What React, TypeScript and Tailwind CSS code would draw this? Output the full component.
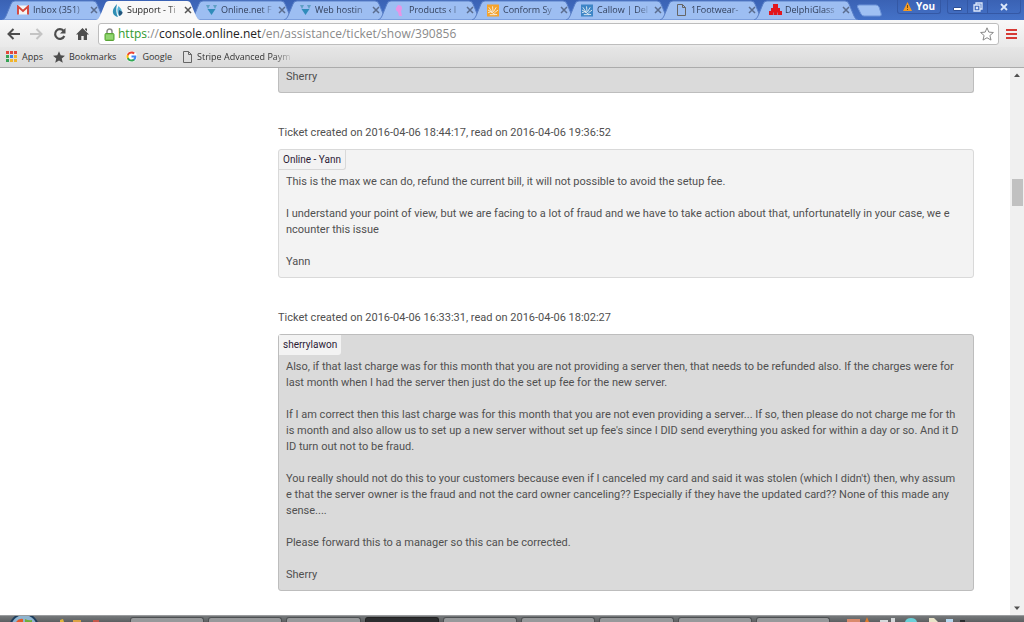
import { ReactNode } from "react";

interface TabRow {
  title: string;
  icon: ReactNode;
  active?: boolean;
}

const TABS: TabRow[] = [
  { title: "Inbox (351)", icon: <GmailIcon /> },
  { title: "Support - Ti", icon: <DropIcon />, active: true },
  { title: "Online.net F", icon: <PinsIcon /> },
  { title: "Web hostin", icon: <PinsIcon /> },
  { title: "Products ‹ I", icon: <PinkIcon /> },
  { title: "Conform Sy", icon: <BurstIcon className="text-[#f5a32c]" /> },
  { title: "Callow | Del", icon: <BurstIcon className="text-[#3d85c6]" /> },
  { title: "1Footwear-", icon: <PageIcon /> },
  { title: "DelphiGlass", icon: <GlassIcon /> },
];

const YANN = [
  "This is the max we can do, refund the current bill, it will not possible to avoid the setup fee.",
  "",
  "I understand your point of view, but we are facing to a lot of fraud and we have to take action about that, unfortunatelly in your case, we e",
  "ncounter this issue",
  "",
  "Yann",
];

const SHERRY = [
  "Also, if that last charge was for this month that you are not providing a server then, that needs to be refunded also. If the charges were for",
  "last month when I had the server then just do the set up fee for the new server.",
  "",
  "If I am correct then this last charge was for this month that you are not even providing a server... If so, then please do not charge me for th",
  "is month and also allow us to set up a new server without set up fee's since I DID send everything you asked for within a day or so. And it D",
  "ID turn out not to be fraud.",
  "",
  "You really should not do this to your customers because even if I canceled my card and said it was stolen (which I didn't) then, why assum",
  "e that the server owner is the fraud and not the card owner canceling?? Especially if they have the updated card?? None of this made any",
  "sense....",
  "",
  "Please forward this to a manager so this can be corrected.",
  "",
  "Sherry",
];

export default function App() {
  return (
    <div className="flex h-screen flex-col overflow-hidden bg-white font-['Open_Sans','Noto_Sans',sans-serif]">
      <TabStrip />
      <Toolbar />
      <Bookmarks />
      <div className="flex min-h-0 flex-1">
        <main className="min-w-0 flex-1 overflow-hidden pr-9 pl-[278px] font-[Roboto,sans-serif] text-[11px] leading-4 text-[#505050]">
          <div className="rounded-b-[3px] border border-t-0 border-[#bdbdbd] bg-[#dadada] px-[7px] pt-px pb-[7px]">
            Sherry
          </div>
          <Message
            header="Ticket created on 2016-04-06 18:44:17, read on 2016-04-06 19:36:52"
            author="Online - Yann"
            lines={YANN}
          />
          <Message
            header="Ticket created on 2016-04-06 16:33:31, read on 2016-04-06 18:02:27"
            author="sherrylawon"
            lines={SHERRY}
            own
          />
        </main>
        <Scrollbar />
      </div>
      <Taskbar />
    </div>
  );
}

function Message({
  header,
  author,
  lines,
  own,
}: {
  header: string;
  author: string;
  lines: string[];
  own?: boolean;
}) {
  return (
    <article className="mt-8">
      <h2 className="mb-2">{header}</h2>
      <div
        className={
          own
            ? "rounded-[3px] border border-[#bdbdbd] bg-[#dadada] pb-[7px]"
            : "rounded-[3px] border border-[#d9d9d9] bg-[#f3f3f3] pb-[7px]"
        }
      >
        <div className="flex">
          <span
            className={
              own
                ? "h-5 rounded-br-[3px] bg-[#f3f3f3] px-1 text-[10px] leading-5 text-[#2b1b35]"
                : "h-5 rounded-br-[3px] border-r border-b border-[#d9d9d9] px-1 text-[10px] leading-5 text-[#2b1b35]"
            }
          >
            {author}
          </span>
        </div>
        <p className="mt-1 px-[7px] whitespace-pre">{lines.join("\n")}</p>
      </div>
    </article>
  );
}

function TabStrip() {
  return (
    <header className="flex h-5 shrink-0 bg-linear-to-b from-[#3a62b4] to-[#4472c8] pl-[6px]">
      {TABS.map((tab) => (
        <Tab key={tab.title} tab={tab} />
      ))}
      <button type="button" aria-label="New tab" className="ml-1 h-5 shrink-0">
        <svg width="26" height="20" viewBox="0 0 26 20">
          <path d="M3 5h17q2 0 3 2l2 6q1 3-1 3H8q-2 0-3-2L1.500 7Q1 5 3 5z" fill="#9fc0f3" stroke="#6c93d8" />
        </svg>
      </button>
      <div className="ml-auto flex pr-[3px]">
        <button
          type="button"
          className="mr-[6px] flex h-[14px] w-11 items-center justify-center gap-1 rounded-b-[3px] border border-t-0 border-[#3458a5] text-[10px] font-bold text-white"
        >
          <svg width="9" height="9" viewBox="0 0 9 9">
            <path d="M4.500 0L9 9H0z" fill="#f59b23" />
            <path d="M4.500 3v3M4.500 7v1" stroke="#7a4a08" />
          </svg>
          You
        </button>
        <div className="flex h-[14px] divide-x divide-[#3458a5] rounded-b-[3px] border border-t-0 border-[#3458a5]">
          <button type="button" aria-label="Minimize" className="flex w-5 items-center justify-center">
            <svg width="9" height="14" viewBox="0 0 9 14">
              <path d="M.5 7.500h8v3h-8z" fill="#fff" stroke="#2d4f96" />
            </svg>
          </button>
          <button type="button" aria-label="Restore" className="flex w-5 items-center justify-center">
            <svg width="10" height="14" viewBox="0 0 10 14" fill="none" stroke="#dce8fb" strokeWidth="1.300">
              <path d="M3 5V3h6v6H7M1 5h6v6H1zM3.500 7.500h1v1h-1z" />
            </svg>
          </button>
          <button type="button" aria-label="Close" className="flex w-8 items-center justify-center">
            <svg width="8" height="14" viewBox="0 0 8 14" stroke="#dce8fb" strokeWidth="1.800">
              <path d="M1 4l6 6M7 4l-6 6" />
            </svg>
          </button>
        </div>
      </div>
    </header>
  );
}

function Tab({ tab }: { tab: TabRow }) {
  return (
    <div className={tab.active ? "relative z-10 h-5 w-[94px] min-w-0" : "relative h-5 w-[94px] min-w-0"}>
      <svg
        className="absolute top-0 -left-1 h-5 w-[104px]"
        viewBox="0 0 104 20"
        preserveAspectRatio="none"
      >
        <path
          d="M0 20Q3 19 4 16L9 4Q10 1 13 1H91Q94 1 95 4L100 16Q101 19 104 20z"
          fill={tab.active ? "#f8f8f8" : "#9dbef2"}
          stroke={tab.active ? "#f8f8f8" : "#5a80c8"}
          strokeWidth={tab.active ? 0 : 1}
        />
      </svg>
      <div className="relative flex h-5 items-center pl-[11px]">
        <a
          href="#"
          className={
            tab.active
              ? "flex items-center gap-1 text-[9px] leading-5 text-[#222]"
              : "flex items-center gap-1 text-[9px] leading-5 text-[#33415c]"
          }
        >
          <span className="flex w-3 shrink-0 justify-center">{tab.icon}</span>
          <span className="w-[54px] mask-r-from-75% mask-r-to-100% whitespace-nowrap">
            {tab.title}
          </span>
        </a>
        <button type="button" aria-label="Close tab" className="ml-[3px]">
          <svg
            width="8"
            height="8"
            viewBox="0 0 8 8"
            stroke={tab.active ? "#555" : "#5b6d8e"}
            strokeWidth="1.500"
          >
            <path d="M1 1l6 6M7 1L1 7" />
          </svg>
        </button>
      </div>
    </div>
  );
}

function Toolbar() {
  return (
    <div className="flex h-[27px] shrink-0 items-center bg-linear-to-b from-[#f8f8f8] to-[#e9e9e9] pt-px pl-[7px]">
      <nav className="flex w-[91px] items-center gap-[10px]">
        <button type="button" aria-label="Back">
          <svg width="13" height="14" viewBox="0 0 13 14" fill="none" stroke="#4d4d4d" strokeWidth="2">
            <path d="M13 7H2M6.500 2L1.500 7l5 5" />
          </svg>
        </button>
        <button type="button" aria-label="Forward">
          <svg width="13" height="14" viewBox="0 0 13 14" fill="none" stroke="#c4c4c4" strokeWidth="2">
            <path d="M0 7h11M6.500 2l5 5-5 5" />
          </svg>
        </button>
        <button type="button" aria-label="Reload">
          <svg width="13" height="14" viewBox="0 0 13 14">
            <path d="M10.500 3.800A4.800 4.800 0 1 0 11.300 9" fill="none" stroke="#4d4d4d" strokeWidth="2.200" />
            <path d="M12.500 1v5.500H7z" fill="#4d4d4d" />
          </svg>
        </button>
        <button type="button" aria-label="Home">
          <svg width="13" height="14" viewBox="0 0 13 14" fill="#4d4d4d">
            <path d="M6.500 1L13 7.500h-2V13H7.700V9H5.300v4H2V7.500H0zM9 1.500h2v3L9 2.500z" />
          </svg>
        </button>
      </nav>
      <div className="flex h-[22px] min-w-0 flex-1 items-center rounded-[3px] border border-[#bdbdbd] bg-white px-1">
        <svg width="11" height="13" viewBox="0 0 11 13" className="mx-[1px] shrink-0">
          <path d="M3 6V3.500a2.500 2.500 0 0 1 5 0V6" fill="none" stroke="#8a8a8a" strokeWidth="1.500" />
          <rect x="1" y="5.500" width="9" height="7" rx="1" fill="#7fca5a" stroke="#58a336" />
          <path d="M2 8h7M2 10h7" stroke="#a5df88" />
        </svg>
        <div className="ml-[2px] grid min-w-0 flex-1 text-xs leading-5">
          <span aria-hidden="true" className="col-start-1 row-start-1 whitespace-pre text-[#8a8a8a]">
            <span className="text-[#2f9a2f]">https</span>://
            <span className="text-[#222]">console.online.net</span>
            /en/assistance/ticket/show/390856
          </span>
          <input
            type="text"
            aria-label="Address"
            defaultValue="https://console.online.net/en/assistance/ticket/show/390856"
            className="col-start-1 row-start-1 min-w-0 bg-transparent text-transparent caret-black outline-none"
          />
        </div>
        <button type="button" aria-label="Bookmark this page">
          <svg width="14" height="14" viewBox="0 0 14 14" fill="#fff" stroke="#888" strokeLinejoin="round">
            <path d="M7 .8l1.800 4.300 4.600.4-3.500 3 1.100 4.600L7 10.700l-4 2.400 1.100-4.600-3.500-3 4.600-.4z" />
          </svg>
        </button>
      </div>
      <button type="button" aria-label="Menu" className="mx-[7px]">
        <svg width="11" height="12" viewBox="0 0 11 12" fill="#d63a35">
          <path d="M0 1h11v2H0zM0 5h11v2H0zM0 9h11v2H0z" />
        </svg>
      </button>
    </div>
  );
}

function Bookmarks() {
  return (
    <nav className="flex h-[21px] shrink-0 items-center border-b border-[#ababab] bg-linear-to-b from-[#e6e6e6] to-[#dadada] pb-px pl-[6px] text-[9px] text-[#333]">
      <a href="#" className="mr-[10px] flex items-center gap-[5px]">
        <svg width="11" height="11" viewBox="0 0 11 11">
          <path d="M0 0h3v3H0zM4 0h3v3H4zM8 0h3v3H8z" fill="#e2483b" />
          <path d="M0 4h3v3H0z" fill="#37a354" />
          <path d="M4 4h3v3H4z" fill="#3f7ee8" />
          <path d="M8 4h3v3H8z" fill="#f2b52c" />
          <path d="M0 8h3v3H0z" fill="#37a354" />
          <path d="M4 8h7v3H8V8H7v3H4z" fill="#f2b52c" />
        </svg>
        Apps
      </a>
      <a href="#" className="mr-[10px] flex items-center gap-1">
        <svg width="12" height="12" viewBox="0 0 14 14" fill="#4d4d4d">
          <path d="M7 .3l2 4.600 5 .5-3.800 3.300 1.200 5L7 11l-4.400 2.700 1.200-5L0 5.400l5-.5z" />
        </svg>
        Bookmarks
      </a>
      <a href="#" className="mr-[11px] flex items-center gap-[5px]">
        <svg width="11" height="11" viewBox="0 0 24 24">
          <rect width="24" height="24" rx="12" fill="#fff" />
          <path
            fill="#4285f4"
            d="M22.560 12.250c0-.78-.07-1.530-.2-2.250H12v4.260h5.920c-.26 1.370-1.040 2.530-2.210 3.310v2.770h3.570c2.080-1.920 3.280-4.740 3.280-8.090z"
          />
          <path
            fill="#34a853"
            d="M12 23c2.970 0 5.460-.98 7.280-2.660l-3.570-2.770c-.98.660-2.230 1.060-3.710 1.060-2.860 0-5.290-1.930-6.160-4.530H2.180v2.840C3.990 20.530 7.700 23 12 23z"
          />
          <path
            fill="#fbbc05"
            d="M5.840 14.090c-.22-.66-.35-1.360-.35-2.090s.13-1.430.35-2.090V7.070H2.180C1.430 8.550 1 10.220 1 12s.43 3.450 1.180 4.930z"
          />
          <path
            fill="#ea4335"
            d="M12 5.380c1.620 0 3.060.56 4.210 1.640l3.150-3.150C17.450 2.090 14.970 1 12 1 7.700 1 3.990 3.470 2.180 7.070l3.660 2.840c.87-2.600 3.300-4.530 6.160-4.530z"
          />
        </svg>
        Google
      </a>
      <a href="#" className="flex items-center gap-[5px]">
        <PageIcon />
        <span className="w-24 mask-r-from-80% mask-r-to-100% whitespace-nowrap">
          Stripe Advanced Paym
        </span>
      </a>
    </nav>
  );
}

function Scrollbar() {
  return (
    <div className="flex w-[14px] shrink-0 flex-col items-center bg-[#f0f0f0]">
      <svg width="14" height="14" viewBox="0 0 14 14" fill="#505050">
        <path d="M4 9l3-3.500L10 9z" />
      </svg>
      <div className="mt-[97px] h-[27px] w-[11px] bg-[#c1c1c1]" />
      <svg width="14" height="14" viewBox="0 0 14 14" fill="#505050" className="mt-auto">
        <path d="M4 5.500L7 9l3-3.500z" />
      </svg>
    </div>
  );
}

function Taskbar() {
  return (
    <footer className="flex h-[7px] shrink-0 items-end overflow-hidden border-t border-[#9a9c9e] bg-linear-to-b from-[#76797b] to-[#5c5f61]">
      <svg width="130" height="9" viewBox="0 0 130 9" className="shrink-0">
        <circle cx="24" cy="15" r="15" fill="#1d3d5c" />
        <circle cx="24" cy="15" r="13" fill="#8fb4cf" />
        <path d="M16 9q3-4 7-3v3z" fill="#e2592b" />
        <path d="M25 6q4 2 7 1v2h-7z" fill="#6fae3c" />
        <path d="M60 7l3-1 1 3h-4z" fill="#e0b53a" />
        <path d="M73 7h8v2h-8z" fill="#dba244" />
        <path d="M93 7h6v2h-6z" fill="#c4574a" />
      </svg>
      <div className="flex flex-1 gap-1">
        {[0, 1, 2, 3, 4, 5, 6, 7, 8].map((i) => (
          <button
            key={i}
            type="button"
            aria-label={`Window ${i + 1}`}
            className={
              i === 3
                ? "h-[5px] flex-1 rounded-t-[3px] border border-b-0 border-[#222] bg-[#2c2d2f]"
                : "h-[5px] flex-1 rounded-t-[3px] border border-b-0 border-[#4d5052] bg-[#97999b]"
            }
          />
        ))}
      </div>
      <svg width="194" height="5" viewBox="0 0 194 5" className="shrink-0">
        <path d="M17 2h13v3H17z" fill="#d98a6c" />
        <path d="M37 0l2 5h-4z" fill="#e07b2c" />
        <path d="M50 3h8v2h-8zM61 1h4v4h-4z" fill="#d5d8da" />
        <path d="M75 5q1-4 6-4t6 4z" fill="#6bd0d8" />
        <path d="M99 1h5l4 4h-9z" fill="#e9e4c9" />
        <path d="M116 2h7v3h-7z" fill="#b8d7ee" />
        <path d="M130 3h5v2h-5z" fill="#2b2d2f" />
      </svg>
    </footer>
  );
}

function GmailIcon() {
  return (
    <svg width="12" height="10" viewBox="0 0 12 10">
      <path d="M1 .5h10v9H1z" fill="#f4f4f4" />
      <path d="M1 9.500V1.500l5 4.500 5-4.500v8" fill="none" stroke="#d6453b" strokeWidth="1.900" />
    </svg>
  );
}

function DropIcon() {
  return (
    <svg width="11" height="13" viewBox="0 0 11 13">
      <path d="M5 0Q0 5 1 9q1 3 5 4Q3 8 5 0z" fill="#2f8fb5" />
      <path d="M6.500 2Q4 7 7 12q3-1 3-4Q10 5 6.500 2z" fill="#56b6d8" />
      <path d="M7 6q-1 3 .5 6Q11 10 10.500 8z" fill="#24557c" />
    </svg>
  );
}

function PinsIcon() {
  return (
    <svg width="11" height="10" viewBox="0 0 11 10">
      <path d="M0 0h4L2 4zM7 0h4L9 4z" fill="#5f9fc4" />
      <path d="M1.500 4h8l-4 6z" fill="#2f8cba" />
    </svg>
  );
}

function PinkIcon() {
  return (
    <svg width="8" height="11" viewBox="0 0 8 11">
      <path d="M3 0q4 0 4 3 0 2-1 3l1 5H4L3 7Q0 5 1 3z" fill="#e795e6" />
    </svg>
  );
}

function BurstIcon({ className }: { className: string }) {
  return (
    <svg width="13" height="13" viewBox="0 0 13 13" className={className}>
      <path d="M0 0h13v13H0z" fill="currentColor" />
      <path
        d="M1 9q3-2 5 0t5 2M6 9L2 3M6.500 8L6 2M7 8l3-5M8 9l4-3M5 8L1 6M3 11h6"
        fill="none"
        stroke="#f3f6f8"
        strokeWidth=".9"
      />
    </svg>
  );
}

function PageIcon() {
  return (
    <svg width="9" height="12" viewBox="0 0 9 12" fill="none" stroke="#666" className="shrink-0">
      <path d="M.5.5h5l3 3v8h-8zM5.500.5v3h3" />
    </svg>
  );
}

function GlassIcon() {
  return (
    <svg width="13" height="12" viewBox="0 0 13 12" className="shrink-0">
      <path
        d="M4 0h5v4H4zM2 4h9v3h2v4H9V8.500H8.500V11h-4V8.500H4V11H0V7h2z"
        fill="#e3161d"
      />
    </svg>
  );
}
